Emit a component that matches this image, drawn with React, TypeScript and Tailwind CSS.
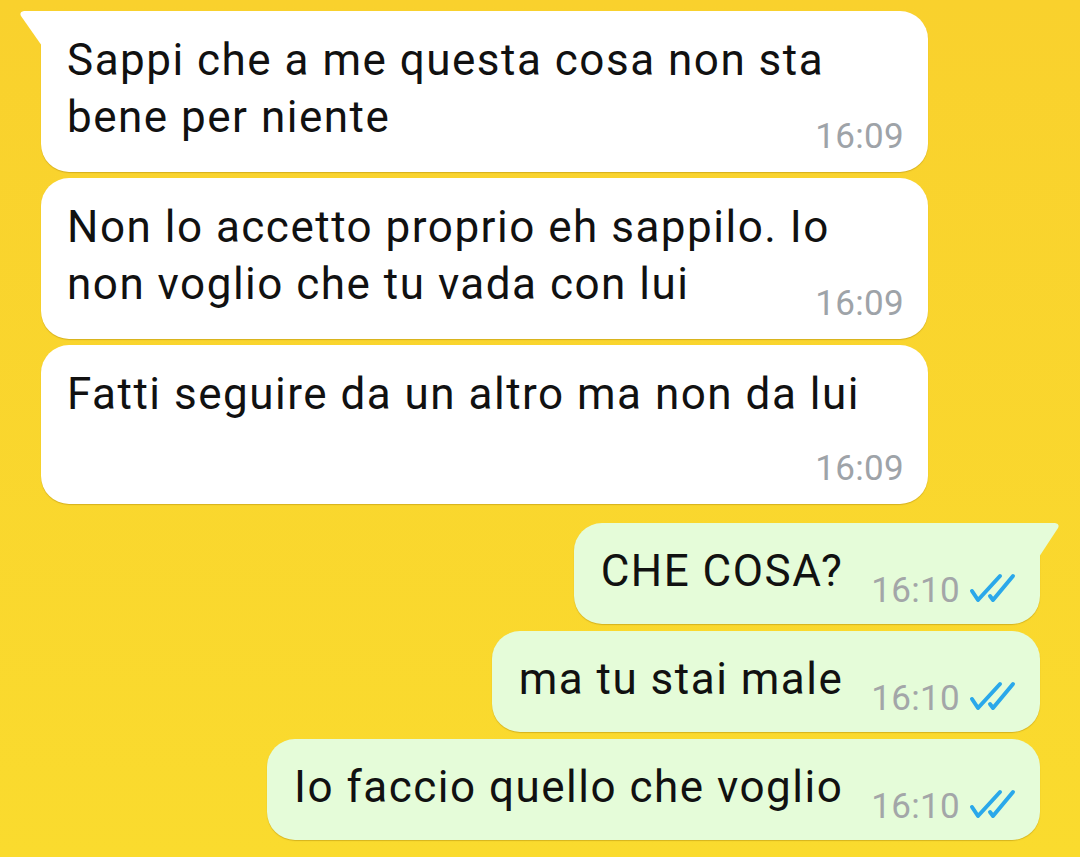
import React from 'react';

type Incoming = { text: string; time: string; tail?: boolean; timeClass: string };
type Outgoing = { text: string; time: string; tail?: boolean };

const incoming: Incoming[] = [
    { text: 'Sappi che a me questa cosa non sta bene per niente', time: '16:09', tail: true, timeClass: 'mt-[-27px]' },
    { text: 'Non lo accetto proprio eh sappilo. Io non voglio che tu vada con lui', time: '16:09', timeClass: 'mt-[-27px]' },
    { text: 'Fatti seguire da un altro ma non da lui', time: '16:09', timeClass: 'mt-[28px]' },
];

const outgoing: Outgoing[] = [
    { text: 'CHE COSA?', time: '16:10', tail: true },
    { text: 'ma tu stai male', time: '16:10' },
    { text: 'Io faccio quello che voglio', time: '16:10' },
];

const DoubleCheck = () => (
    <svg width="48" height="30" viewBox="0 0 48 30" fill="none" className="shrink-0">
        <path d="M4 18 L10 27 L32 3" stroke="#2aa8ea" strokeWidth="4" strokeLinecap="round" strokeLinejoin="round" />
        <path d="M22 23 L25 27 L45 3" stroke="#2aa8ea" strokeWidth="4" strokeLinecap="round" strokeLinejoin="round" />
    </svg>
);

const InBubble: React.FC<{ msg: Incoming }> = ({ msg }) => (
    <div
        className={
            'relative ml-[41px] w-[887px] bg-white rounded-[28px] shadow-[0_1px_1px_rgba(150,110,0,0.35)] pl-[26px] pr-[24px] pt-[21px] pb-[18px] flex flex-col ' +
            (msg.tail ? 'rounded-tl-none' : '')
        }
    >
        {msg.tail && (
            <svg width="22" height="35" viewBox="0 0 22 35" className="absolute left-[-21px] top-0">
                <path d="M4 0 H22 V35 L1 5 Q-1 1 4 0 Z" fill="#ffffff" />
            </svg>
        )}
        <p className="text-[44px] leading-[57px] tracking-[1.5px] text-[#111]">{msg.text}</p>
        <span className={'self-end text-[35px] leading-none tracking-[0.3px] text-[#9ea3a8] ' + msg.timeClass}>
            {msg.time}
        </span>
    </div>
);

const OutBubble: React.FC<{ msg: Outgoing }> = ({ msg }) => (
    <div
        className={
            'relative self-end mr-[40px] bg-[#e5fcd9] rounded-[28px] shadow-[0_1px_1px_rgba(150,110,0,0.35)] pl-[27px] pr-[24px] pt-[20px] pb-[16px] flex items-start ' +
            (msg.tail ? 'rounded-tr-none' : '')
        }
    >
        {msg.tail && (
            <svg width="20" height="34" viewBox="0 0 20 34" className="absolute right-[-19px] top-0">
                <path d="M0 0 H16 Q21 1 19 5 L0 34 Z" fill="#e5fcd9" />
            </svg>
        )}
        <p className="text-[44px] leading-[57px] tracking-[1.5px] text-[#111] whitespace-nowrap">{msg.text}</p>
        <div className="ml-[28px] mt-[30px] flex items-start gap-[8px]">
            <span className="text-[35px] leading-none tracking-[0.3px] text-[#a3a6a8]">{msg.time}</span>
            <DoubleCheck />
        </div>
    </div>
);

export default function App() {
    return (
        <div
            className="w-[1080px] h-[857px] overflow-hidden bg-gradient-to-b from-[#f9d12d] to-[#fadb2e] flex flex-col pt-[11px]"
            style={{ fontFamily: 'Roboto, "Noto Sans", sans-serif' }}
        >
            <div className="flex flex-col gap-[6px]">
                {incoming.map((m, i) => (
                    <InBubble key={i} msg={m} />
                ))}
            </div>
            <div className="flex flex-col gap-[7px] mt-[19px]">
                {outgoing.map((m, i) => (
                    <OutBubble key={i} msg={m} />
                ))}
            </div>
        </div>
    );
}
